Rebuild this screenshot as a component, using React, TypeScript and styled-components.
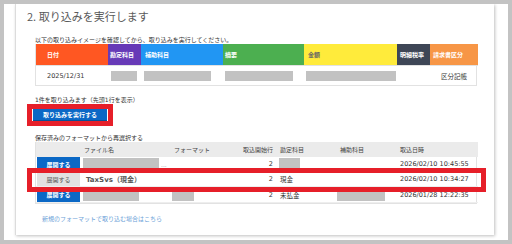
import styled, { createGlobalStyle } from "styled-components";

const GlobalStyle = createGlobalStyle`
	html, body {
		margin: 0;
		padding: 0;
		background: #c3c3c3;
	}
	body {
		font-family: "DejaVu Sans", "Noto Sans CJK JP", sans-serif;
		color: #333;
	}
`;

const Frame = styled.div`
	margin: 4px;
	width: 504px;
	height: 236px;
	background: #fff;
	overflow: hidden;
	padding-left: 11px;
	box-sizing: border-box;
`;

const Card = styled.div`
	width: 479px;
	height: 231px;
	box-sizing: border-box;
	border-left: 1px solid #dcdcdc;
	box-shadow: 1px 1px 3px rgba(0, 0, 0, 0.25);
	padding: 5px 17px 0 19px;
	display: flex;
	flex-direction: column;
`;

const Title = styled.h2`
	margin: 0 0 0 -8px;
	font-family: "Noto Sans CJK JP", sans-serif;
	font-size: 11px;
	line-height: 14px;
	font-weight: 400;
	color: #5a5a5a;
`;

const Note = styled.p<{ $top: number }>`
	margin: ${({ $top }) => $top}px 0 0;
	font-size: 6px;
	line-height: 8px;
	color: #333;
`;

/* preview table with coloured headers */
const PreviewGrid = styled.div`
	display: grid;
	grid-template-columns: 72px 33px 82px 81px 93px 33px 48px;
	grid-template-rows: 21px 20px;
	border: 1px solid #e2e2e2;
	border-top: none;
	margin-left: 0;
	width: 442px;
	box-sizing: border-box;
`;

const HeadCell = styled.div<{ $bg: string; $fg?: string; $pad: number }>`
	background: ${({ $bg }) => $bg};
	color: ${({ $fg }) => $fg || "#fff"};
	font-size: 6px;
	font-weight: 700;
	padding-left: ${({ $pad }) => $pad}px;
	display: flex;
	align-items: center;
	white-space: nowrap;
	overflow: hidden;
`;

const DataCell = styled.div<{ $pad: number; $center?: boolean }>`
	display: flex;
	align-items: center;
	justify-content: ${({ $center }) => ($center ? "center" : "flex-start")};
	padding-left: ${({ $pad }) => $pad}px;
	font-size: 6.5px;
	color: #333;
	white-space: nowrap;
	border-top: 1px solid #e2e2e2;
`;

const Blank = styled.span<{ $w: number; $h?: number }>`
	display: inline-block;
	width: ${({ $w }) => $w}px;
	height: ${({ $h }) => $h || 10}px;
	background: #c2c2c2;
`;

const Highlight = styled.div`
	margin-left: -8px;
	align-self: flex-start;
	border: 5px solid #e61f29;
	padding: 0 1px;
`;

const RunButton = styled.button`
	display: block;
	width: 74px;
	height: 12px;
	border: none;
	border-bottom: 1px solid #0a4f95;
	background: #0b68c6;
	color: #fff;
	font-family: "Noto Sans CJK JP", sans-serif;
	font-size: 6px;
	font-weight: 700;
	padding: 0;
	line-height: 11px;
`;

/* saved format table */
const FormatWrap = styled.div`
	position: relative;
	width: 442px;
`;

const FormatGrid = styled.div`
	display: grid;
	grid-template-columns: 44px 89px 72px 34px 61px 60px 82px;
	grid-template-rows: 15px 15px 15px 16px;
	border: 1px solid #e2e2e2;
	border-top: none;
	box-sizing: border-box;
`;

const FHead = styled.div<{ $pad?: number; $right?: boolean }>`
	background: #ebebeb;
	font-size: 6px;
	color: #444;
	display: flex;
	align-items: center;
	justify-content: ${({ $right }) => ($right ? "flex-end" : "flex-start")};
	padding-left: ${({ $pad }) => $pad || 0}px;
	white-space: nowrap;
	overflow: hidden;
`;

const FCell = styled.div<{ $pad?: number; $right?: boolean; $bold?: boolean }>`
	display: flex;
	align-items: center;
	justify-content: ${({ $right }) => ($right ? "flex-end" : "flex-start")};
	padding-left: ${({ $pad }) => $pad || 0}px;
	padding-right: ${({ $right }) => ($right ? 2 : 0)}px;
	font-size: ${({ $bold }) => ($bold ? 7 : 6.5)}px;
	font-weight: ${({ $bold }) => ($bold ? 700 : 400)};
	color: ${({ $bold }) => ($bold ? "#555" : "#333")};
	white-space: nowrap;
	overflow: hidden;
	border-bottom: 1px solid #eee;
`;

const ExpandButton = styled.button<{ $active?: boolean }>`
	width: 43px;
	height: 14px;
	margin-left: 1px;
	border: none;
	padding: 0;
	background: ${({ $active }) => ($active ? "#0b68c6" : "#e2e2e2")};
	color: ${({ $active }) => ($active ? "#fff" : "#555")};
	font-family: "Noto Sans CJK JP", sans-serif;
	font-size: 6px;
	font-weight: ${({ $active }) => ($active ? 700 : 400)};
`;

const RowMark = styled.div`
	position: absolute;
	left: -8px;
	top: 26px;
	width: 459px;
	height: 24px;
	box-sizing: border-box;
	border: 5px solid #e61f29;
	pointer-events: none;
`;

const Dots = styled.span`
	color: #999;
	font-size: 6px;
	margin-left: 2px;
`;

const NewLink = styled.a`
	margin: 11px 0 0 7px;
	font-size: 6px;
	line-height: 8px;
	color: #6c9fd8;
	text-decoration: none;
`;

const headers = [
	{ label: "日付", bg: "#ff5722", pad: 11 },
	{ label: "勘定科目", bg: "#673ab7", pad: 2 },
	{ label: "補助科目", bg: "#2196f3", pad: 4 },
	{ label: "摘要", bg: "#4caf50", pad: 2 },
	{ label: "金額", bg: "#ffeb3b", fg: "#666", pad: 4 },
	{ label: "明細税率", bg: "#3e4656", pad: 3 },
	{ label: "請求書区分", bg: "#f79646", pad: 3 },
];

const App = () => {
	return (
		<>
			<GlobalStyle />
			<Frame>
				<Card>
					<Title>2. 取り込みを実行します</Title>
					<Note $top={13}>以下の取り込みイメージを確認してから、取り込みを実行してください。</Note>
					<PreviewGrid>
						{headers.map((h) => (
							<HeadCell key={h.label} $bg={h.bg} $fg={h.fg} $pad={h.pad}>
								{h.label}
							</HeadCell>
						))}
						<DataCell $pad={11}>2025/12/31</DataCell>
						<DataCell $pad={3}>
							<Blank $w={26} />
						</DataCell>
						<DataCell $pad={3}>
							<Blank $w={67} />
						</DataCell>
						<DataCell $pad={2}>
							<Blank $w={68} />
						</DataCell>
						<DataCell $pad={2}>
							<Blank $w={90} />
						</DataCell>
						<DataCell $pad={0} />
						<DataCell $pad={0} $center>
							区分記帳
						</DataCell>
					</PreviewGrid>
					<Note $top={10}>1件を取り込みます（先頭1行を表示）</Note>
					<Highlight>
						<RunButton>取り込みを実行する</RunButton>
					</Highlight>
					<Note $top={8}>保存済みのフォーマットから再選択する</Note>
					<FormatWrap>
						<FormatGrid>
							<FHead />
							<FHead $pad={4}>ファイル名</FHead>
							<FHead $pad={5}>フォーマット</FHead>
							<FHead $pad={2}>取込開始行</FHead>
							<FHead $pad={5}>勘定科目</FHead>
							<FHead $pad={4}>補助科目</FHead>
							<FHead $pad={4}>取込日時</FHead>

							<FCell>
								<ExpandButton $active>展開する</ExpandButton>
							</FCell>
							<FCell $pad={3}>
								<Blank $w={76} $h={12} />
								<Dots>...</Dots>
							</FCell>
							<FCell />
							<FCell $right>2</FCell>
							<FCell $pad={4}>
								<Blank $w={21} $h={12} />
							</FCell>
							<FCell />
							<FCell $pad={4}>2026/02/10 10:45:55</FCell>

							<FCell>
								<ExpandButton>展開する</ExpandButton>
							</FCell>
							<FCell $pad={6} $bold>
								TaxSvs（現金）
							</FCell>
							<FCell />
							<FCell $right>2</FCell>
							<FCell $pad={5}>現金</FCell>
							<FCell />
							<FCell $pad={4}>2026/02/10 10:34:27</FCell>

							<FCell>
								<ExpandButton $active>展開する</ExpandButton>
							</FCell>
							<FCell $pad={3}>
								<Blank $w={56} $h={12} />
							</FCell>
							<FCell $pad={3}>
								<Blank $w={22} $h={12} />
							</FCell>
							<FCell $right>2</FCell>
							<FCell $pad={5}>未払金</FCell>
							<FCell $pad={1}>
								<Blank $w={48} $h={12} />
							</FCell>
							<FCell $pad={4}>2026/01/28 12:22:35</FCell>
						</FormatGrid>
						<RowMark />
					</FormatWrap>
					<NewLink href="#">新規のフォーマットで取り込む場合はこちら</NewLink>
				</Card>
			</Frame>
		</>
	);
};

export default App;
